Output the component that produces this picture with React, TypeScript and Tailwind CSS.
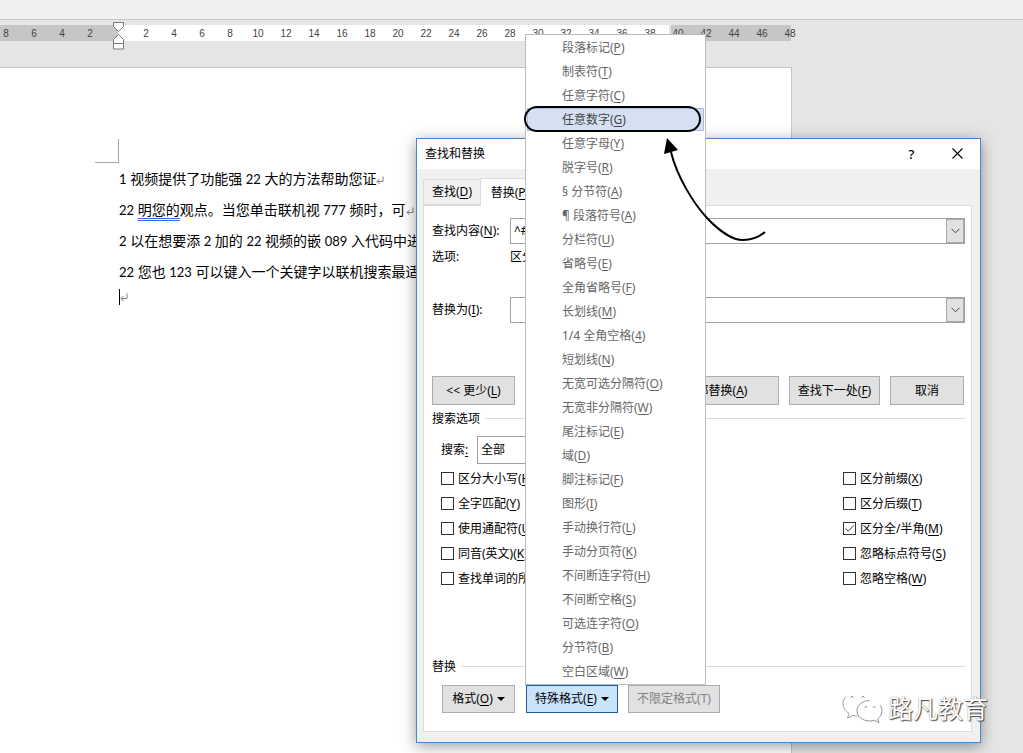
import React from 'react'
import clsx from 'clsx'

const MENU_ITEMS = [
  '段落标记(P)',
  '制表符(T)',
  '任意字符(C)',
  '任意数字(G)',
  '任意字母(Y)',
  '脱字号(R)',
  '§ 分节符(A)',
  '¶ 段落符号(A)',
  '分栏符(U)',
  '省略号(E)',
  '全角省略号(F)',
  '长划线(M)',
  '1/4 全角空格(4)',
  '短划线(N)',
  '无宽可选分隔符(O)',
  '无宽非分隔符(W)',
  '尾注标记(E)',
  '域(D)',
  '脚注标记(F)',
  '图形(I)',
  '手动换行符(L)',
  '手动分页符(K)',
  '不间断连字符(H)',
  '不间断空格(S)',
  '可选连字符(O)',
  '分节符(B)',
  '空白区域(W)'
]
const HIGHLIGHTED = 3

const LEFT_OPTIONS = ['区分大小写(H)', '全字匹配(Y)', '使用通配符(U)', '同音(英文)(K)', '查找单词的所']
const RIGHT_OPTIONS = ['区分前缀(X)', '区分后缀(T)', '区分全/半角(M)', '忽略标点符号(S)', '忽略空格(W)']

const RULER = [8, 6, 4, 2, 0, ...Array.from({ length: 24 }, (_, i) => (i + 1) * 2)]

// Underlines the access key letter of a label such as "查找(D)"
const Mnemonic: React.FC<{ text: string }> = ({ text }) => {
  const m = text.match(/^(.*\()([A-Z0-9])(\).*)$/)
  if (!m) return <>{text}</>
  return (
    <span>
      {m[1]}
      <span className="underline underline-offset-2">{m[2]}</span>
      {m[3]}
    </span>
  )
}

// Latin digits are set in their own size inside the document text
const DocText: React.FC<{ text: string }> = ({ text }) => (
  <>
    {text.split(/(\d+)/).map((part, i) =>
      /^\d+$/.test(part) ? (
        <span key={i} className="text-[13px]">{part}</span>
      ) : (
        <React.Fragment key={i}>{part}</React.Fragment>
      )
    )}
  </>
)

const ParagraphMark: React.FC = () => (
  <svg width="8" height="9" viewBox="0 0 8 9" fill="none" stroke="#808080" className="inline-block">
    <path d="M7 0.500v5H1M3.500 3L1 5.500l2.500 2.500" />
  </svg>
)

const Caret: React.FC = () => (
  <svg width="8" height="4" viewBox="0 0 8 4" fill="currentColor">
    <path d="M0 0h8L4 4z" />
  </svg>
)

const DialogButton: React.FC<{
  text: string
  className: string
  disabled?: boolean
  active?: boolean
  caret?: boolean
}> = ({ text, className, disabled, active, caret }) => (
  <button
    type="button"
    disabled={disabled}
    className={clsx(
      'flex items-center justify-center gap-1 border whitespace-nowrap',
      active ? 'border-[#1f5c99] bg-[#c9e3fa]' : 'border-[#adadad] bg-[#e1e1e1]',
      disabled && 'text-[#838383]',
      className
    )}
  >
    {disabled ? text : <Mnemonic text={text} />}
    {caret && <Caret />}
  </button>
)

const ComboRow: React.FC<{ id: string; label: string; value: string; className?: string }> = ({ id, label, value, className }) => (
  <div className={clsx('flex h-[26px] items-stretch', className)}>
    <label htmlFor={id} className="flex w-[78px] shrink-0 items-center">
      <Mnemonic text={label} />
    </label>
    <div className="flex min-w-0 flex-1 border border-[#a0a0a0] bg-white">
      <input id={id} type="text" defaultValue={value} className="min-w-0 flex-1 px-[3px] outline-none" />
      <button type="button" aria-label={label} className="flex w-[18px] items-center justify-center border border-[#a9a9a9] bg-[#e1e1e1]">
        <svg width="9" height="6" viewBox="0 0 9 6" fill="none" stroke="#444">
          <path d="M0.5 0.8L4.5 4.8L8.5 0.8" />
        </svg>
      </button>
    </div>
  </div>
)

const GroupTitle: React.FC<{ text: string; className: string }> = ({ text, className }) => (
  <div className={clsx('flex h-[19px] items-center gap-[5px]', className)}>
    <span>{text}</span>
    <span className="h-px flex-1 bg-[#d9d9d9]" />
  </div>
)

const Option: React.FC<{ text: string; checked?: boolean }> = ({ text, checked }) => (
  <label className="flex h-[25px] items-center gap-1 whitespace-nowrap">
    <span className="grid">
      <input
        type="checkbox"
        defaultChecked={checked}
        className="peer col-start-1 row-start-1 size-[13px] appearance-none border border-[#333] bg-white"
      />
      <svg viewBox="0 0 13 13" fill="none" stroke="#333" className="invisible col-start-1 row-start-1 size-[13px] peer-checked:visible">
        <path d="M2.500 6.500L5.200 9.200L10.800 3.400" />
      </svg>
    </span>
    <Mnemonic text={text} />
  </label>
)

const Ruler: React.FC = () => (
  <div className="relative mt-[5px] grid h-4">
    <div className="col-start-1 row-start-1 flex">
      <div className="w-[118px] bg-[#c6c6c6]" />
      <div className="mr-0.5 w-[551px] bg-white" />
      <div className="w-[120px] bg-[#c6c6c6]" />
    </div>
    <div className="col-start-1 row-start-1 -ml-2 flex items-center pt-0.5 font-['Liberation_Sans',sans-serif] text-[10px] leading-[14px] text-[#444]">
      {RULER.map((n, i) => (
        <span key={i} className="w-7 shrink-0 text-center">{n || ''}</span>
      ))}
    </div>
    <svg width="12" height="29" viewBox="0 0 12 29" fill="#fff" stroke="#7a7a7a" className="absolute -top-[3px] left-[113px]">
      <path d="M0.5 0.5h10v4L5.5 9.5L0.5 4.5z" />
      <path d="M5.5 12.5L10.5 17.5v9.500h-10v-9.500z" />
      <path d="M0.5 21.500h10" />
    </svg>
  </div>
)

const SpecialMenu: React.FC = () => (
  <div role="menu" className="absolute bottom-full -left-px z-20 w-[181px] border border-[#bdbdbd] bg-white pb-px text-[#666]">
    {MENU_ITEMS.map((item, i) => (
      <button
        key={i}
        type="button"
        role="menuitem"
        className={clsx(
          'relative flex h-6 w-full items-center pt-0.5 pl-9 whitespace-pre',
          i === HIGHLIGHTED && 'text-[#444]'
        )}
      >
        {i === HIGHLIGHTED && (
          <>
            <span className="absolute inset-x-px top-px bottom-0 border border-[#a9bbe0] bg-[#d5e0f2]" />
            <span className="absolute -inset-y-px right-1 -left-0.5 rounded-full border-2 border-black" />
          </>
        )}
        <span className="relative">
          <Mnemonic text={item} />
        </span>
      </button>
    ))}
    <svg width="110" height="110" viewBox="0 0 110 110" className="absolute top-[100px] left-[134px]">
      <path d="M11 17C17 42 34 69 47 83C62 99 75 105 83 105C92 105 98 103 105 97" fill="none" stroke="#000" strokeWidth="2" />
      <path d="M7 3L4 19L18 15z" />
    </svg>
  </div>
)

const FindReplaceDialog: React.FC = () => (
  <section
    role="dialog"
    aria-labelledby="dialog-title"
    className="absolute top-[138px] left-[416px] w-[565px] border border-[#4688cc] bg-[#f0f0f0] font-['Noto_Sans','Noto_Sans_CJK_SC',sans-serif] text-[12px] leading-4 text-black shadow-[0_3px_14px_rgba(0,0,0,0.4)]"
  >
    <header className="flex h-[30px] items-center bg-white pb-px pl-2">
      <h1 id="dialog-title" className="flex-1">查找和替换</h1>
      <button type="button" className="w-[45px] text-center text-[13px] font-medium">?</button>
      <button type="button" aria-label="关闭" className="flex w-[46px] justify-center">
        <svg width="11" height="11" viewBox="0 0 11 11" stroke="#000" strokeWidth="1.1">
          <path d="M0.5 0.500L10.500 10.500M10.500 0.500L0.500 10.500" />
        </svg>
      </button>
    </header>

    <div className="pt-[9px] pr-2 pb-2.5 pl-1.5">
      <div role="tablist" className="relative -mb-px flex items-end">
        <button type="button" role="tab" className="mb-px h-[26px] w-[57px] border border-r-0 border-[#dcdcdc]">
          <Mnemonic text="查找(D)" />
        </button>
        <button type="button" role="tab" aria-selected className="h-7 w-[60px] border border-b-0 border-[#dcdcdc] bg-white">
          <Mnemonic text="替换(P)" />
        </button>
      </div>

      <div className="border border-[#dcdcdc] bg-white pt-3 pr-1.5 pb-[18px] pl-2">
        <ComboRow id="find" label="查找内容(N):" value="^#" />
        <div className="flex h-[26px] items-center">
          <span className="w-[78px]">选项:</span>
          <span>区分</span>
        </div>
        <ComboRow id="replace" label="替换为(I):" value="" className="mt-[27px]" />

        <div className="mt-[53px] flex h-[29px] items-stretch gap-2.5 pr-px">
          <DialogButton text="<< 更少(L)" className="mr-auto w-[83px]" />
          <DialogButton text="全部替换(A)" className="w-[126px]" />
          <DialogButton text="查找下一处(F)" className="w-[91px]" />
          <DialogButton text="取消" className="w-[74px]" />
        </div>

        <GroupTitle text="搜索选项" className="mt-1" />
        <div className="mt-2 flex h-7 items-stretch pl-[9px]">
          <label htmlFor="direction" className="flex w-9 items-center">
            搜索<span className="underline underline-offset-2">:</span>
          </label>
          <select id="direction" className="w-[90px] appearance-none border border-[#a0a0a0] bg-white px-[3px]">
            <option>全部</option>
          </select>
        </div>
        <div className="mt-0.5 flex justify-between pl-[9px]">
          <div>
            {LEFT_OPTIONS.map((text) => (
              <Option key={text} text={text} />
            ))}
          </div>
          <div className="w-[122px]">
            {RIGHT_OPTIONS.map((text, i) => (
              <Option key={text} text={text} checked={i === 2} />
            ))}
          </div>
        </div>

        <GroupTitle text="替换" className="mt-[66px]" />
        <div className="mt-[9px] flex h-7 items-stretch gap-2.5 pl-2.5">
          <DialogButton text="格式(O)" className="w-[73px]" caret />
          <div className="relative ml-px flex">
            <DialogButton text="特殊格式(E)" className="w-[92px]" active caret />
            <SpecialMenu />
          </div>
          <DialogButton text="不限定格式(T)" className="w-[92px]" disabled />
        </div>
      </div>
    </div>
  </section>
)

const Watermark: React.FC = () => (
  <div className="pointer-events-none absolute top-[689px] left-[842px] z-30 flex items-center gap-1">
    <svg width="42" height="36" viewBox="0 0 42 36" fill="#fff" stroke="#888">
      <path d="M17 2C8 2 1 7.500 1 14.500c0 4 2.400 7.500 6 10l-1.500 4.500 5.500-2.700c2 .6 4 .9 6 .9 9 0 16-5.700 16-12.700S26 2 17 2z" stroke="none" />
      <path d="M4 7.500C2 9.500 1 12 1 14.500c0 4 2.400 7.500 6 10l-1.500 4.500 5.500-2.700c1.500.5 3 .7 4.500.8" strokeWidth="0.8" />
      <path d="M27.500 11.500C20.500 11.500 15 16 15 21.700s5.500 10.300 12.500 10.300c1.700 0 3.300-.3 4.700-.8l4.800 2.500-1.300-4c2.700-2 4.300-4.800 4.300-8 0-5.700-5.500-10.200-12.500-10.200z" stroke="none" />
      <path d="M27.500 11.500C20.500 11.500 15 16 15 21.700s5.500 10.300 12.500 10.300c1.700 0 3.300-.3 4.700-.8l4.800 2.500-1.300-4c2.700-2 4.300-4.800 4.300-8 0-2-.7-4-2-5.600" fill="none" strokeWidth="0.9" />
      <path d="M8.500 8.500q1.500-2.500 3 0M19.500 8.500q1.500-2.500 3 0M22.500 18.500q1.300-2.300 2.600 0M31 18.500q1.300-2.300 2.600 0" fill="none" />
    </svg>
    <span className="font-['Noto_Sans_CJK_SC',sans-serif] text-[25px] leading-8 whitespace-nowrap text-white [text-shadow:1px_1px_1px_#444,0_0_1px_#777]">路凡教育</span>
  </div>
)

export default function App() {
  return (
    <main className="relative flex min-h-screen flex-col overflow-hidden bg-[#e5e5e5]">
      <div className="h-5 border-b border-[#c8c8c8] bg-[#f0f0f0]" />
      <Ruler />

      <article className="mt-[26px] w-[792px] flex-1 border-t border-r border-[#c6c6c6] bg-white pt-[71px] font-['Lato','Noto_Sans_CJK_SC',sans-serif] text-[14px] text-black">
        <div className="ml-[95px] size-6 border-r border-b border-[#a6a6a6]" />
        <div className="ml-[119px] leading-[31px] whitespace-nowrap *:h-[31px]">
          <p><DocText text="1 视频提供了功能强 22 大的方法帮助您证" /><ParagraphMark /></p>
          <p>
            <DocText text="22 " />
            <span className="underline decoration-[#2f6fe0] decoration-double underline-offset-3">明您的</span>
            <DocText text="观点。当您单击联机视 777 频时，可" />
            <ParagraphMark />
          </p>
          <p><DocText text="2 以在想要添 2 加的 22 视频的嵌 089 入代码中进" /></p>
          <p><DocText text="22 您也 123 可以键入一个关键字以联机搜索最适" /></p>
        </div>
        <p className="ml-[119px] flex h-5 items-center">
          <span className="h-4 w-px bg-black" />
          <ParagraphMark />
        </p>
      </article>

      <FindReplaceDialog />
      <Watermark />
    </main>
  )
}
